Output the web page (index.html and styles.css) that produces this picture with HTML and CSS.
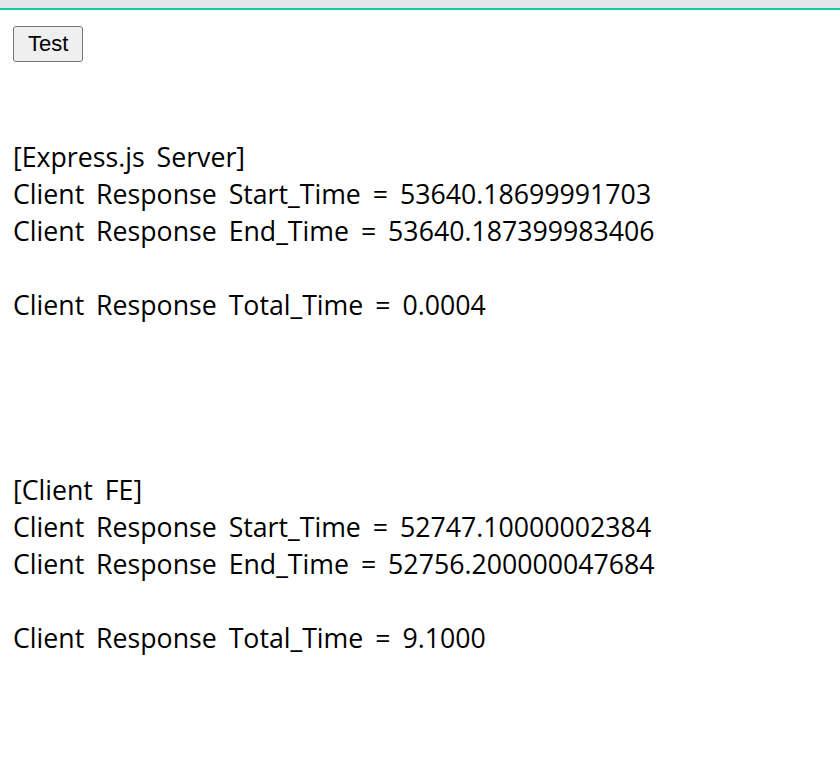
FILE: index.html
```html
<!DOCTYPE html>
<html lang="en">
<head>
    <meta charset="UTF-8">
    <meta name="viewport" content="width=device-width, initial-scale=1.0">
    <title>Response Time Test</title>
    <link rel="stylesheet" href="styles.css">
</head>
<body>
    <div class="topbar"></div>
    <div class="content">
        <button class="test-btn">Test</button>

        <div class="log server">
            <div class="line">[Express.js Server]</div>
            <div class="line">Client Response Start_Time = 53640.18699991703</div>
            <div class="line">Client Response End_Time = 53640.187399983406</div>
            <div class="line empty"></div>
            <div class="line">Client Response Total_Time = 0.0004</div>
        </div>

        <div class="log client">
            <div class="line">[Client FE]</div>
            <div class="line">Client Response Start_Time = 52747.10000002384</div>
            <div class="line">Client Response End_Time = 52756.200000047684</div>
            <div class="line empty"></div>
            <div class="line">Client Response Total_Time = 9.1000</div>
        </div>
    </div>
</body>
</html>
```

FILE: styles.css
```css
body {
    margin: 0;
    background-color: #fff;
    font-family: "Open Sans", "Noto Sans CJK KR", sans-serif;
    color: #000;
}
.topbar {
    height: 8px;
    background-color: #e4e7ea;
    border-bottom: 2px solid #12c99b;
}
.content {
    padding: 16px 13px;
}
.test-btn {
    display: block;
    font-family: Arial, "Liberation Sans", sans-serif;
    font-size: 22px;
    padding: 0 14px;
    height: 36px;
    background-color: #efefef;
    border: 1px solid #767676;
    border-radius: 3px;
    color: #000;
}
.log {
    font-size: 26.7px;
    line-height: 37px;
    word-spacing: 5px;
}
.server {
    margin-top: 76px;
}
.client {
    margin-top: 148px;
}
.line.empty {
    height: 37px;
}
```
